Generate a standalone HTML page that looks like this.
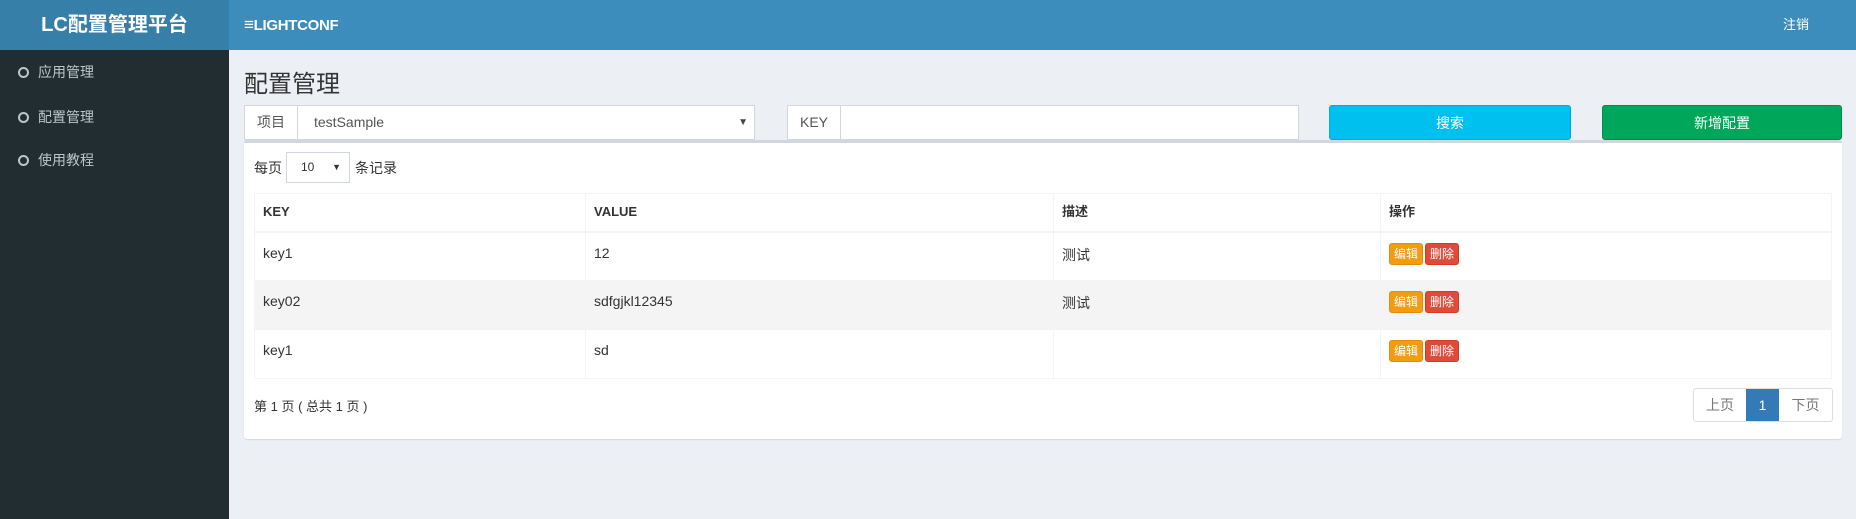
<!DOCTYPE html>
<html><head><meta charset="utf-8"><style>
*{box-sizing:border-box;margin:0;padding:0}
body{width:1856px;height:519px;overflow:hidden;background:#ecf0f5;font-family:"Liberation Sans","Noto Sans CJK SC",sans-serif;font-size:14px;color:#333;position:relative}
.abs{position:absolute}
.logo{left:0;top:0;width:229px;height:50px;background:#367fa9;color:#fff;font-weight:bold;font-size:20px;text-align:center;line-height:50px}
.hdr{left:229px;top:0;right:0;height:50px;background:#3c8dbc;color:#fff}
.side{left:0;top:50px;width:229px;bottom:0;background:#222d32}
.mi{left:18px;color:#b8c7ce;font-size:14px;display:flex;align-items:center}
.mi i{display:inline-block;width:11px;height:11px;border:2px solid #b8c7ce;border-radius:50%;margin-right:9px}
.grp{top:105px;height:35px;background:#fff;border:1px solid #d2d6de;display:flex}
.grp .lb{border-right:1px solid #d2d6de;padding:0 12px;line-height:33px;color:#555}
.btn{top:105px;height:35px;border-radius:3px;color:#fff;text-align:center;line-height:35px}
.box{left:244px;top:140px;width:1598px;height:299px;background:#fff;border-top:3px solid #d2d6de;border-radius:3px;box-shadow:0 1px 1px rgba(0,0,0,.1)}
table{position:absolute;left:254px;top:193px;width:1578px;border-collapse:collapse}
td,th{border:1px solid #f4f4f4;text-align:left;padding:0 8px;vertical-align:top}
th{height:38px;line-height:36px;border-bottom:2px solid #f4f4f4;font-weight:bold;font-size:13px}
td{height:49px;padding-top:12px}
tr.s td{background:#f4f4f4}
.b{display:inline-block;height:22px;line-height:20px;padding:0 4px;font-size:12px;color:#fff;border-radius:3px;margin-top:-2px}
.e{background:#f39c12;border:1px solid #e08e0b}.d{background:#dd4b39;border:1px solid #d73925;margin-left:2px}
.pg{left:1693px;top:388px;height:34px;display:flex;border:1px solid #ddd;border-radius:3px;overflow:hidden}
.pg span{line-height:32px;color:#777;font-size:14px;text-align:center}
</style></head><body>
<div class="abs logo">LC配置管理平台</div>
<div class="abs hdr"><span class="abs" style="left:15px;top:15px;font-weight:bold;font-size:15px;letter-spacing:-0.3px"><span style="font-size:17px">≡</span>LIGHTCONF</span><span class="abs" style="right:47px;top:14px;font-size:13px">注销</span></div>
<div class="abs side"></div>
<div class="abs mi" style="top:62px"><i></i>应用管理</div>
<div class="abs mi" style="top:107px"><i></i>配置管理</div>
<div class="abs mi" style="top:150px"><i></i>使用教程</div>
<div class="abs" style="left:244px;top:64px;font-size:24px;color:#333">配置管理</div>
<div class="abs grp" style="left:244px;width:511px"><span class="lb">项目</span><span style="padding-left:16px;line-height:33px;color:#555;flex:1">testSample</span><span style="line-height:33px;padding-right:6px;font-size:10px;color:#444">▼</span></div>
<div class="abs grp" style="left:787px;width:512px"><span class="lb">KEY</span></div>
<div class="abs btn" style="left:1329px;width:242px;background:#00c0ef;border:1px solid #00acd6">搜索</div>
<div class="abs btn" style="left:1602px;width:240px;background:#00a65a;border:1px solid #008d4c">新增配置</div>
<div class="abs box"></div>
<div class="abs" style="left:254px;top:158px">每页</div>
<div class="abs" style="left:286px;top:152px;width:64px;height:31px;border:1px solid #d2d6de;font-size:12px;line-height:29px;padding-left:14px">10<span style="position:absolute;right:8px;font-size:9px">▼</span></div>
<div class="abs" style="left:355px;top:158px">条记录</div>
<table>
<tr><th style="width:331px">KEY</th><th style="width:468px">VALUE</th><th style="width:327px">描述</th><th>操作</th></tr>
<tr><td>key1</td><td>12</td><td>测试</td><td><span class="b e">编辑</span><span class="b d">删除</span></td></tr>
<tr class="s"><td>key02</td><td>sdfgjkl12345</td><td>测试</td><td><span class="b e">编辑</span><span class="b d">删除</span></td></tr>
<tr><td>key1</td><td>sd</td><td></td><td><span class="b e">编辑</span><span class="b d">删除</span></td></tr>
</table>
<div class="abs" style="left:254px;top:396px;font-size:13px">第 1 页 ( 总共 1 页 )</div>
<div class="abs pg"><span style="width:52px">上页</span><span style="background:#337ab7;color:#fff;width:33px">1</span><span style="width:53px">下页</span></div>
</body></html>
